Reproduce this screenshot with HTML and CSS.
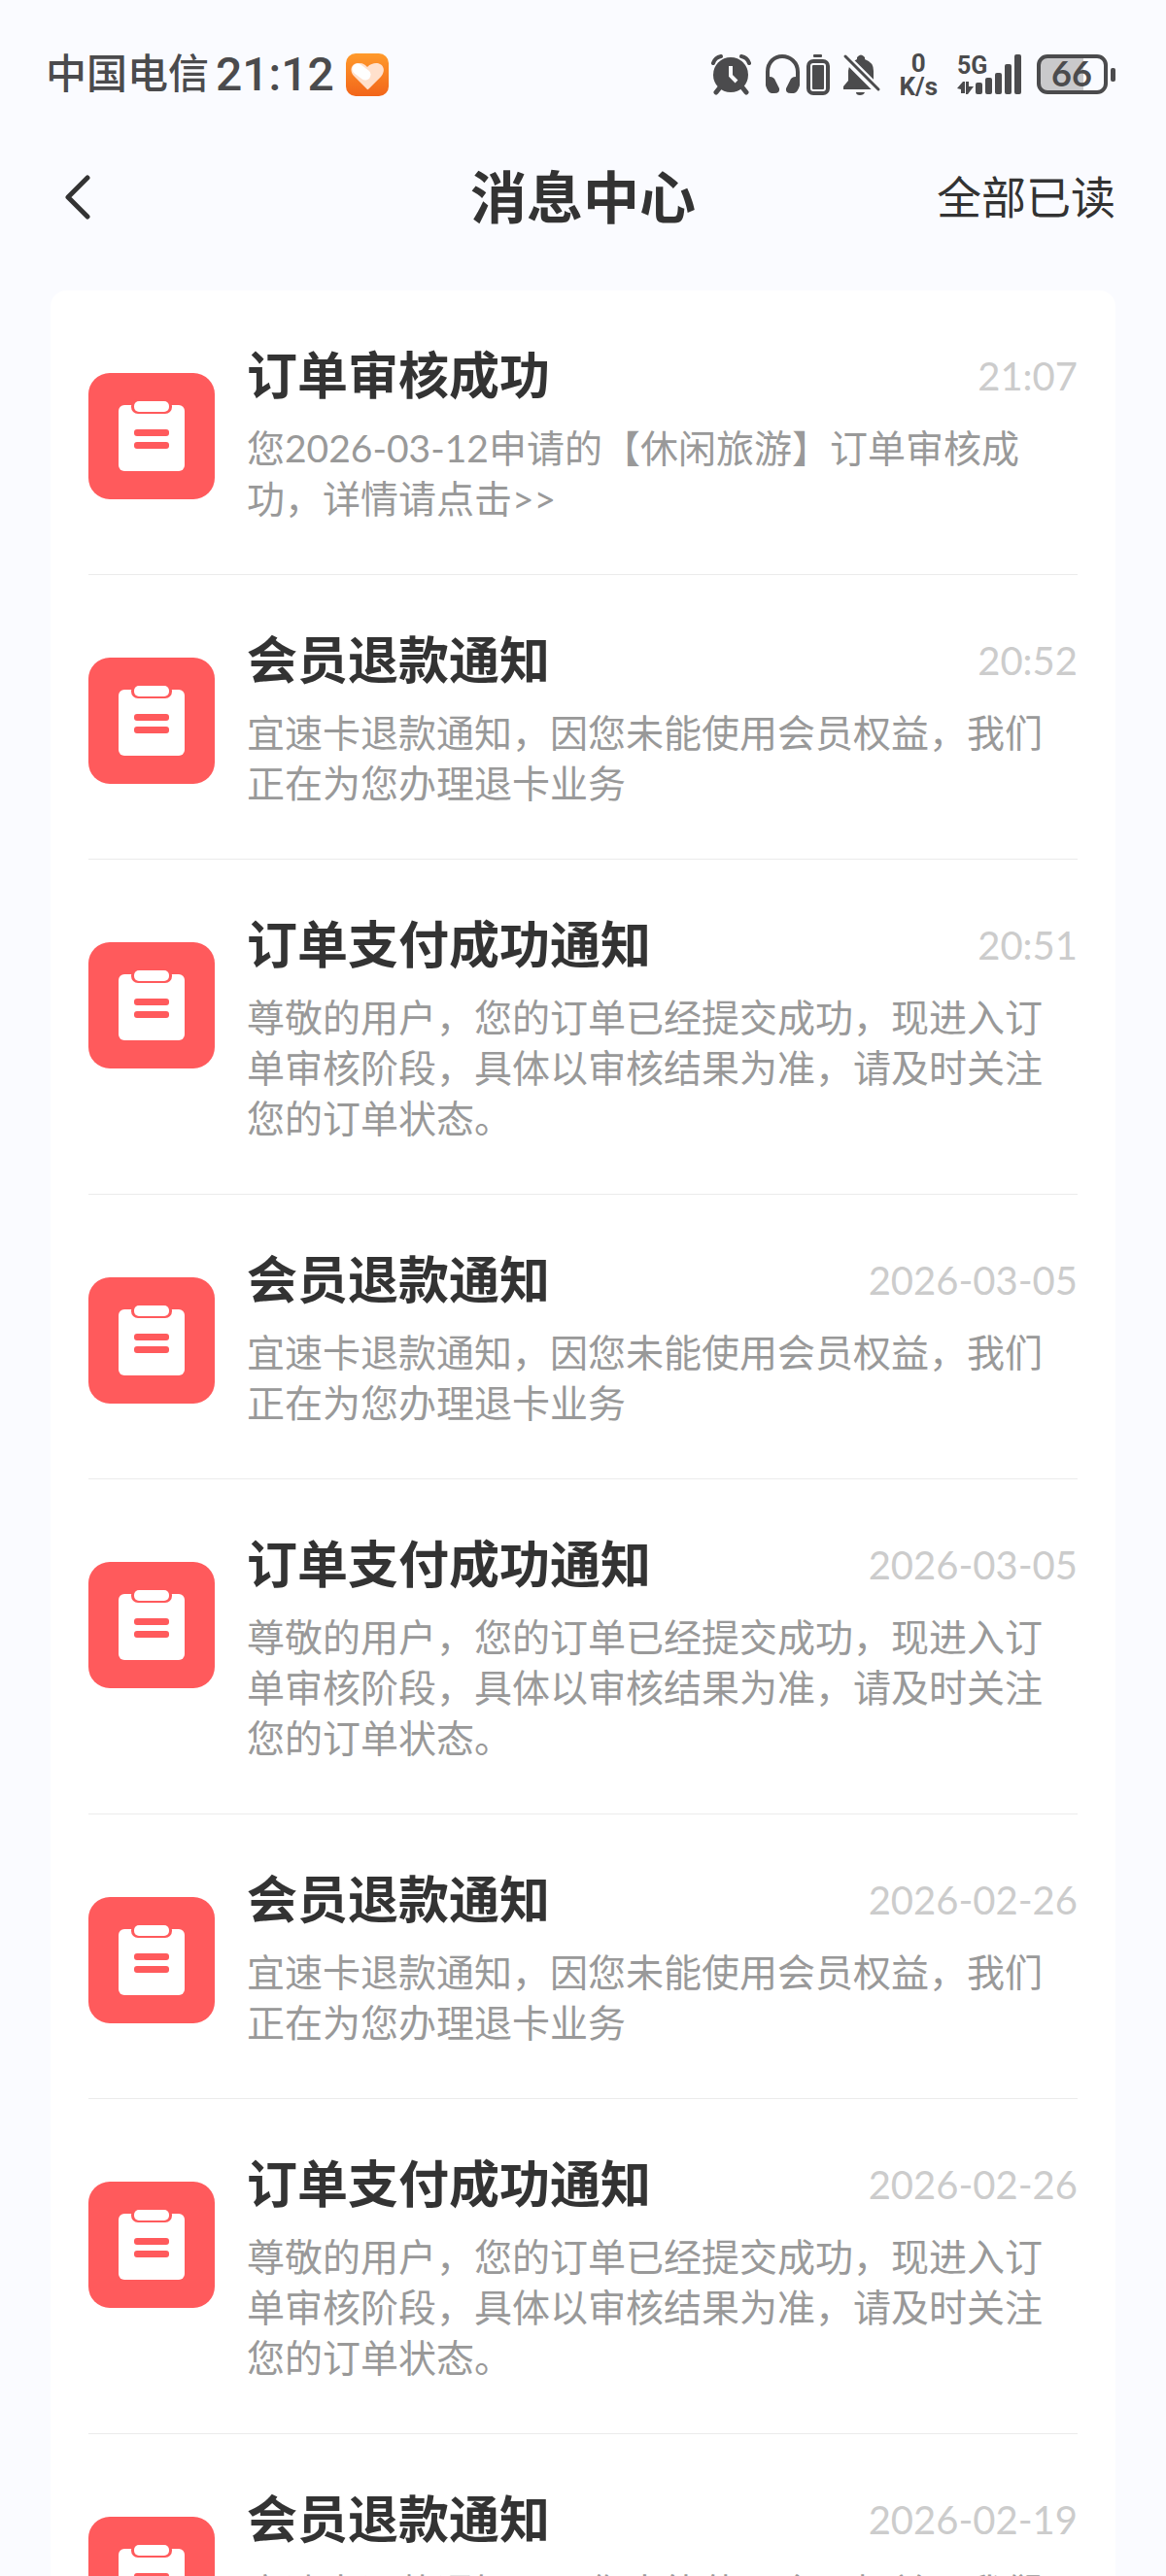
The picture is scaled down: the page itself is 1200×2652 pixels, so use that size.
FILE: index.html
```html
<!DOCTYPE html>
<html lang="zh-CN">
<head>
    <meta charset="UTF-8">
    <meta name="viewport" content="width=device-width, initial-scale=1.0">
    <title>消息中心</title>
    <link rel="stylesheet" href="styles.css">
</head>
<body>
    <!-- shared clipboard icon -->
    <svg class="sprite" aria-hidden="true">
        <symbol id="clipboard" viewBox="0 0 130 130">
            <rect width="130" height="130" rx="22" fill="#ff5a5c"/>
            <rect x="31" y="33" width="68" height="68" rx="6" fill="#fff"/>
            <rect x="44" y="27" width="42" height="15" rx="7" fill="#ff5a5c"/>
            <rect x="47" y="29" width="36" height="11" rx="5" fill="#fff"/>
            <rect x="47" y="58" width="36" height="7" rx="3" fill="#ff5a5c"/>
            <rect x="47" y="71" width="36" height="7" rx="3" fill="#ff5a5c"/>
        </symbol>
    </svg>

    <div class="app">
        <div class="status-bar">
            <div class="status-left">
                <span class="carrier">中国电信</span>
                <span class="clock">21:12</span>
                <svg class="app-icon" width="44" height="44" viewBox="0 0 44 44">
                    <defs>
                        <linearGradient id="orange" x1="0" y1="0" x2="0" y2="1">
                            <stop offset="0" stop-color="#ff9a2b"/>
                            <stop offset="1" stop-color="#f2651a"/>
                        </linearGradient>
                    </defs>
                    <rect width="44" height="44" rx="10" fill="url(#orange)"/>
                    <path d="M22 37 L8 23 C2 15 8 9 14 10 C18 10 20 12 22 14 C25 11 28 10 31 10 C38 10 42 17 36 24 L24 36 Q22 38 22 37Z" fill="#ffe0cc"/>
                    <path d="M12 16 L20 22" stroke="#fff" stroke-width="11" stroke-linecap="round"/>
                </svg>
            </div>

            <div class="status-right">
                <!-- alarm -->
                <svg width="41" height="42" viewBox="0 0 41 42">
                    <g stroke="#4b4b4d" stroke-linecap="round" fill="none">
                        <path d="M2 9 Q4 3 10 2M39 9 Q37 3 31 2" stroke-width="4"/>
                        <path d="M9 34 L5 39M32 34 L36 39" stroke-width="5"/>
                    </g>
                    <circle cx="20" cy="21" r="18" fill="#4b4b4d"/>
                    <path d="M20 12 V22 L26 28" fill="none" stroke="#fafbff" stroke-width="4"/>
                </svg>
                <!-- headphones with their battery -->
                <svg class="headset" width="67" height="42" viewBox="0 0 67 42">
                    <path d="M3 27 V18 C3 8 10 2 18 2 S34 8 34 18 V27" fill="none" stroke="#4b4b4d" stroke-width="4"/>
                    <path d="M1 25 Q6 21 10 25 L15 35 Q16 40 10 40 H7 Q3 39 1 32ZM36 25 Q31 21 27 25 L22 35 Q21 40 27 40 H30 Q34 39 36 32Z" fill="#4b4b4d"/>
                    <rect x="50" y="0" width="9" height="3" rx="1" fill="#4b4b4d"/>
                    <rect x="45" y="7" width="20" height="33" rx="5" fill="none" stroke="#4b4b4d" stroke-width="4"/>
                    <rect x="49" y="11" width="12" height="25" rx="1" fill="#4b4b4d"/>
                </svg>
                <!-- muted bell -->
                <svg class="bell" width="40" height="44" viewBox="0 0 40 44">
                    <path d="M1 37 V34 L6 28 V18 Q7 9 15 6 V4 Q19 -1 23 4 V6 Q32 9 32 18 V28 L37 34 V37Z" fill="#4b4b4d"/>
                    <path d="M14 40 H23 Q22 43 18 43 T14 40Z" fill="#4b4b4d"/>
                    <path d="M0 1 L40 41" stroke="#fafbff" stroke-width="9"/>
                    <path d="M3 3 L37 37" stroke="#4b4b4d" stroke-width="3" stroke-linecap="round"/>
                </svg>
                <div class="net-speed"><span>0</span><span>K/s</span></div>
                <!-- mobile signal -->
                <svg class="signal" width="67" height="42" viewBox="0 0 67 42">
                    <text class="signal-label" x="0" y="20">5G</text>
                    <g fill="#4b4b4d">
                        <path d="M0 35 L6 28 H8 V40 H4 V36ZM9 28 H12 V33 H17 L11 41 H9Z"/>
                        <rect x="19" y="29" width="7" height="12" rx="2"/>
                        <rect x="29" y="24" width="7" height="17" rx="2"/>
                        <rect x="39" y="19" width="7" height="22" rx="2"/>
                        <rect x="49" y="10" width="7" height="31" rx="2"/>
                        <rect x="59" y="0" width="7" height="41" rx="2"/>
                    </g>
                </svg>
                <!-- phone battery -->
                <svg class="battery" width="82" height="42" viewBox="0 0 82 42">
                    <path d="M10 2 H48 V39 H10 Q2 39 2 31 V10 Q2 2 10 2Z" fill="#c9c9cb"/>
                    <rect x="2" y="2" width="69" height="37" rx="9" fill="none" stroke="#4b4b4d" stroke-width="4"/>
                    <rect x="76" y="14" width="5" height="14" rx="2" fill="#4b4b4d"/>
                    <text class="battery-label" x="36" y="33">66</text>
                </svg>
            </div>
        </div>

        <header class="nav">
            <button class="back" type="button" aria-label="返回">
                <svg width="26" height="46" viewBox="0 0 26 46">
                    <path d="M23 3 L3 23 L23 43" fill="none" stroke="#333" stroke-width="5" stroke-linecap="round" stroke-linejoin="round"/>
                </svg>
            </button>
            <h1>消息中心</h1>
            <button class="read-all" type="button">全部已读</button>
        </header>

        <main class="list">
            <article class="item">
                <svg class="item-icon"><use href="#clipboard"/></svg>
                <div class="item-body">
                    <div class="item-head"><h2>订单审核成功</h2><time>21:07</time></div>
                    <p>您2026-03-12申请的【休闲旅游】订单审核成功，详情请点击&gt;&gt;</p>
                </div>
            </article>
            <article class="item">
                <svg class="item-icon"><use href="#clipboard"/></svg>
                <div class="item-body">
                    <div class="item-head"><h2>会员退款通知</h2><time>20:52</time></div>
                    <p>宜速卡退款通知，因您未能使用会员权益，我们正在为您办理退卡业务</p>
                </div>
            </article>
            <article class="item">
                <svg class="item-icon"><use href="#clipboard"/></svg>
                <div class="item-body">
                    <div class="item-head"><h2>订单支付成功通知</h2><time>20:51</time></div>
                    <p>尊敬的用户，您的订单已经提交成功，现进入订单审核阶段，具体以审核结果为准，请及时关注您的订单状态。</p>
                </div>
            </article>
            <article class="item">
                <svg class="item-icon"><use href="#clipboard"/></svg>
                <div class="item-body">
                    <div class="item-head"><h2>会员退款通知</h2><time>2026-03-05</time></div>
                    <p>宜速卡退款通知，因您未能使用会员权益，我们正在为您办理退卡业务</p>
                </div>
            </article>
            <article class="item">
                <svg class="item-icon"><use href="#clipboard"/></svg>
                <div class="item-body">
                    <div class="item-head"><h2>订单支付成功通知</h2><time>2026-03-05</time></div>
                    <p>尊敬的用户，您的订单已经提交成功，现进入订单审核阶段，具体以审核结果为准，请及时关注您的订单状态。</p>
                </div>
            </article>
            <article class="item">
                <svg class="item-icon"><use href="#clipboard"/></svg>
                <div class="item-body">
                    <div class="item-head"><h2>会员退款通知</h2><time>2026-02-26</time></div>
                    <p>宜速卡退款通知，因您未能使用会员权益，我们正在为您办理退卡业务</p>
                </div>
            </article>
            <article class="item">
                <svg class="item-icon"><use href="#clipboard"/></svg>
                <div class="item-body">
                    <div class="item-head"><h2>订单支付成功通知</h2><time>2026-02-26</time></div>
                    <p>尊敬的用户，您的订单已经提交成功，现进入订单审核阶段，具体以审核结果为准，请及时关注您的订单状态。</p>
                </div>
            </article>
            <article class="item">
                <svg class="item-icon"><use href="#clipboard"/></svg>
                <div class="item-body">
                    <div class="item-head"><h2>会员退款通知</h2><time>2026-02-19</time></div>
                    <p>宜速卡退款通知，因您未能使用会员权益，我们正在为您办理退卡业务</p>
                </div>
            </article>
        </main>
    </div>
</body>
</html>
```
FILE: styles.css
```css
* {
    box-sizing: border-box;
}

body {
    margin: 0;
    font-family: Lato, "Noto Sans CJK SC", sans-serif;
    color: #333;
    background-color: #fafbff;
}

h1, h2, p {
    margin: 0;
}

button {
    padding: 0;
    border: none;
    background: none;
    font-family: inherit;
    color: inherit;
    cursor: pointer;
}

.sprite {
    display: none;
}

.app {
    display: flex;
    flex-direction: column;
    height: 100vh;
    overflow: hidden;
}

/* Status bar */
.status-bar {
    display: flex;
    justify-content: space-between;
    align-items: center;
    flex: none;
    height: 154px;
    padding: 0 51px 0 47px;
    color: #4b4b4d;
}

.status-left, .status-right {
    display: flex;
    align-items: center;
}

.carrier {
    font-size: 42px;
    font-weight: 500;
    line-height: 60px;
    padding-bottom: 4px;
}

.clock {
    margin-left: 7px;
    font-family: Roboto, sans-serif;
    font-size: 48px;
    font-weight: 500;
    line-height: 60px;
}

.app-icon {
    margin-left: 12px;
}

.headset {
    margin-left: 14px;
}

.bell {
    margin-left: 13px;
}

.net-speed {
    display: flex;
    flex-direction: column;
    align-items: center;
    margin-left: 18px;
    font-family: Roboto, sans-serif;
    font-size: 26px;
    font-weight: 700;
    line-height: 24px;
}

.signal {
    margin-left: 20px;
    overflow: visible;
}

.signal-label {
    font: 700 25px Roboto, sans-serif;
    fill: #4b4b4d;
}

.battery {
    margin-left: 15px;
    overflow: visible;
}

.battery-label {
    font: 700 36px Lato, sans-serif;
    text-anchor: middle;
    fill: #4b4b4d;
}

/* Title bar */
.nav {
    display: grid;
    grid-template-columns: 1fr auto 1fr;
    align-items: center;
    flex: none;
    height: 98px;
    margin-bottom: 47px;
    padding: 0 52px;
}

.nav h1 {
    font-size: 58px;
    line-height: 80px;
}

.back {
    justify-self: start;
    display: flex;
    padding-left: 15px;
}

.read-all {
    justify-self: end;
    font-size: 46px;
    line-height: 64px;
}

/* Message list */
.list {
    flex: 1;
    min-height: 0;
    margin: 0 52px;
    padding: 0 39px;
    border-radius: 16px 16px 0 0;
    background-color: #fff;
    overflow-y: auto;
    scrollbar-width: none;
}

.item {
    display: flex;
    align-items: flex-start;
    gap: 33px;
    padding: 51px 0 52px;
    border-bottom: 1px solid #ebebeb;
}

.item-icon {
    flex: none;
    width: 130px;
    height: 130px;
    margin-top: 34px;
}

.item-body {
    flex: 1;
    min-width: 0;
}

.item-head {
    display: flex;
    justify-content: space-between;
    align-items: center;
    margin-bottom: 12px;
}

.item-head h2 {
    font-size: 52px;
    line-height: 73px;
}

.item-head time {
    font-size: 40px;
    line-height: 52px;
    color: #ccc;
}

.item-body p {
    padding-right: 26px;
    font-size: 39px;
    line-height: 52px;
    color: #999;
}
```
